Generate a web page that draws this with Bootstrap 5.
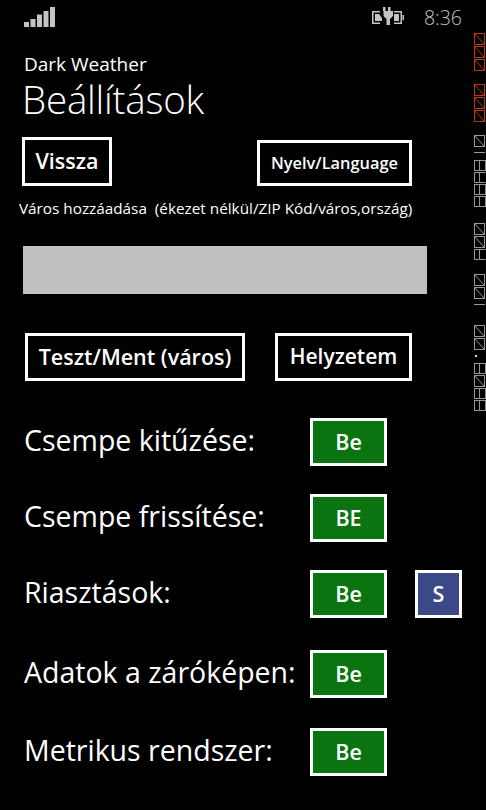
<!DOCTYPE html>
<html lang="hu">
<head>
  <meta charset="UTF-8">
  <title>Dark Weather</title>
  <link href="https://cdn.jsdelivr.net/npm/bootstrap@5.3.3/dist/css/bootstrap.min.css" rel="stylesheet">
  <style>
    html, body { height: 100%; }
    body {
      background: #000;
      color: #fff;
      font-family: "Open Sans", "Noto Sans", sans-serif;
      overflow: hidden;
    }
    .phone { position: relative; width: 486px; height: 810px; }
    .status-bar { height: 32px; padding: 7px 24px 0 24px; color: #c0c0c0; }
    .clock { font-size: 19.5px; line-height: 22px; margin-left: 20px; font-weight: 300; }
    .app-name { font-size: 19px; line-height: 27px; margin: 19px 0 0 24px; }
    .page-name { font-size: 38.5px; line-height: 42px; margin: 0 0 0 22px; font-weight: 300; letter-spacing: -.2px; }
    .wp-btn {
      border: 3px solid #fff;
      border-radius: 0;
      color: #fff;
      font-weight: 600;
      background: #000;
      padding: 0;
      display: flex;
      align-items: center;
      justify-content: center;
      height: 48px;
      white-space: nowrap;
    }
    .wp-btn:hover { color: #fff; background: #000; border-color: #fff; }
    .top-row { margin: 17px 0 0 22px; align-items: flex-end; height: 49px; }
    .btn-back { width: 90px; height: 49px; font-size: 21.5px; }
    .btn-lang { width: 155px; height: 46px; font-size: 16.4px; margin-left: 145px; }
    .city-label { font-size: 15.3px; line-height: 20px; margin: 12px 0 0 19px; white-space: pre; }
    .city-input {
      display: block;
      width: 404px;
      height: 48px;
      margin: 28px 0 0 23px;
      background: #c0c0c0;
      border: 0;
      border-radius: 0;
    }
    .action-row { margin: 39px 0 0 25px; gap: 30px; }
    .btn-test { width: 220px; font-size: 21.5px; }
    .btn-loc { width: 137px; font-size: 21px; }
    .setting-row { margin-left: 24px; height: 48px; }
    .setting-label { width: 286px; font-size: 28.5px; line-height: 48px; margin-top: -4px; white-space: nowrap; }
    .btn-on { width: 77px; background: #0a7510; font-size: 21.5px; }
    .btn-on:hover { background: #0a7510; }
    .btn-s { width: 47px; background: #3b4a86; font-size: 21.5px; margin-left: 28px; }
    .btn-s:hover { background: #3b4a86; }
    .gap-a { margin-top: 28px; }
    .gap-b { margin-top: 32px; }
    .gap-c { margin-top: 30px; }
    .gap-first { margin-top: 37px; }
    .counter-strip { position: absolute; left: 474px; top: 33px; }
  </style>
</head>
<body>
  <div class="phone">
    <div class="status-bar d-flex align-items-start">
      <svg width="31" height="20" viewBox="0 0 31 20" fill="#c4c4c4">
        <rect x="0" y="15" width="5" height="5"/>
        <rect x="6.5" y="12" width="5" height="8"/>
        <rect x="13" y="7.5" width="5" height="12.5"/>
        <rect x="19.5" y="4" width="5" height="16"/>
        <rect x="26" y="0" width="5" height="20"/>
      </svg>
      <div class="ms-auto d-flex align-items-start">
        <svg width="32" height="18" viewBox="0 0 32 18" fill="#c4c4c4">
          <path d="M0 4h8v1.5H1.5v10H8V17H0zM22 4h8v13h-8v-1.5h6.5v-10H22z"/>
          <path d="M3 7h4l3 4v3H3zM22 7h5v7h-5z"/>
          <rect x="30.500" y="8" width="1.500" height="5"/>
          <path d="M11 0h2.500v4h2.500V0h2.500v4H21v5l-3 3v6h-3.500v-6l-3-3V4H11z"/>
        </svg>
        <div class="clock">8:36</div>
      </div>
    </div>

    <div class="app-name">Dark Weather</div>
    <div class="page-name">Beállítások</div>

    <div class="top-row d-flex">
      <button class="btn wp-btn btn-back" type="button">Vissza</button>
      <button class="btn wp-btn btn-lang" type="button">Nyelv/Language</button>
    </div>

    <div class="city-label">Város hozzáadása  (ékezet nélkül/ZIP Kód/város,ország)</div>
    <input class="city-input" type="text" aria-label="Város">

    <div class="action-row d-flex">
      <button class="btn wp-btn btn-test" type="button">Teszt/Ment (város)</button>
      <button class="btn wp-btn btn-loc" type="button">Helyzetem</button>
    </div>

    <div class="setting-row d-flex align-items-center gap-first">
      <div class="setting-label">Csempe kitűzése:</div>
      <button class="btn wp-btn btn-on" type="button">Be</button>
    </div>
    <div class="setting-row d-flex align-items-center gap-a">
      <div class="setting-label">Csempe frissítése:</div>
      <button class="btn wp-btn btn-on" type="button">BE</button>
    </div>
    <div class="setting-row d-flex align-items-center gap-a">
      <div class="setting-label">Riasztások:</div>
      <button class="btn wp-btn btn-on" type="button">Be</button>
      <button class="btn wp-btn btn-s" type="button">S</button>
    </div>
    <div class="setting-row d-flex align-items-center gap-b">
      <div class="setting-label">Adatok a záróképen:</div>
      <button class="btn wp-btn btn-on" type="button">Be</button>
    </div>
    <div class="setting-row d-flex align-items-center gap-c">
      <div class="setting-label">Metrikus rendszer:</div>
      <button class="btn wp-btn btn-on" type="button">Be</button>
    </div>

    <svg class="counter-strip" width="12" height="380" viewBox="0 0 12 380" fill="none" id="strip"></svg>
  </div>

  <script>
    // debug counter strip down the right edge
    const strip = document.getElementById("strip");
    const red = "#b83a10", grey = "#979797";
    let marks = "";
    function box(y, col) {
      marks += `<rect x="0.5" y="${y + 0.5}" width="10" height="11" stroke="${col}"/><path d="M0.5 ${y + 0.5}L10.5 ${y + 11.5}" stroke="${col}"/>`;
    }
    function eight(y, col) {
      marks += `<rect x="0.5" y="${y + 0.5}" width="11" height="10" stroke="${col}"/><path d="M5.5 ${y + 0.5}V${y + 10.5}" stroke="${col}"/>`;
    }
    function five(y, col) {
      marks += `<path d="M11.5 ${y + 0.5}H0.5V${y + 10.5}H5.5V${y + 0.5}M5.500 ${y + 10.5}H11.5" stroke="${col}"/>`;
    }
    function dash(y, col) {
      marks += `<path d="M0 ${y + 0.5}H11" stroke="${col}"/>`;
    }
    [0, 13, 26, 51, 64, 77].forEach(y => box(y, red));
    box(102, grey); dash(119, grey);
    eight(127, grey); five(139, grey); eight(151, grey); eight(163, grey);
    [190, 203].forEach(y => box(y, grey)); five(216, grey);
    [241, 254].forEach(y => box(y, grey)); dash(271, grey);
    [292, 305].forEach(y => box(y, grey));
    marks += `<rect x="1" y="322" width="2" height="2" fill="#ddd"/>`;
    eight(330, grey); box(342, grey); eight(355, grey); eight(367, grey);
    strip.innerHTML = marks;
  </script>
  <script src="https://cdn.jsdelivr.net/npm/bootstrap@5.3.3/dist/js/bootstrap.bundle.min.js"></script>
</body>
</html>
